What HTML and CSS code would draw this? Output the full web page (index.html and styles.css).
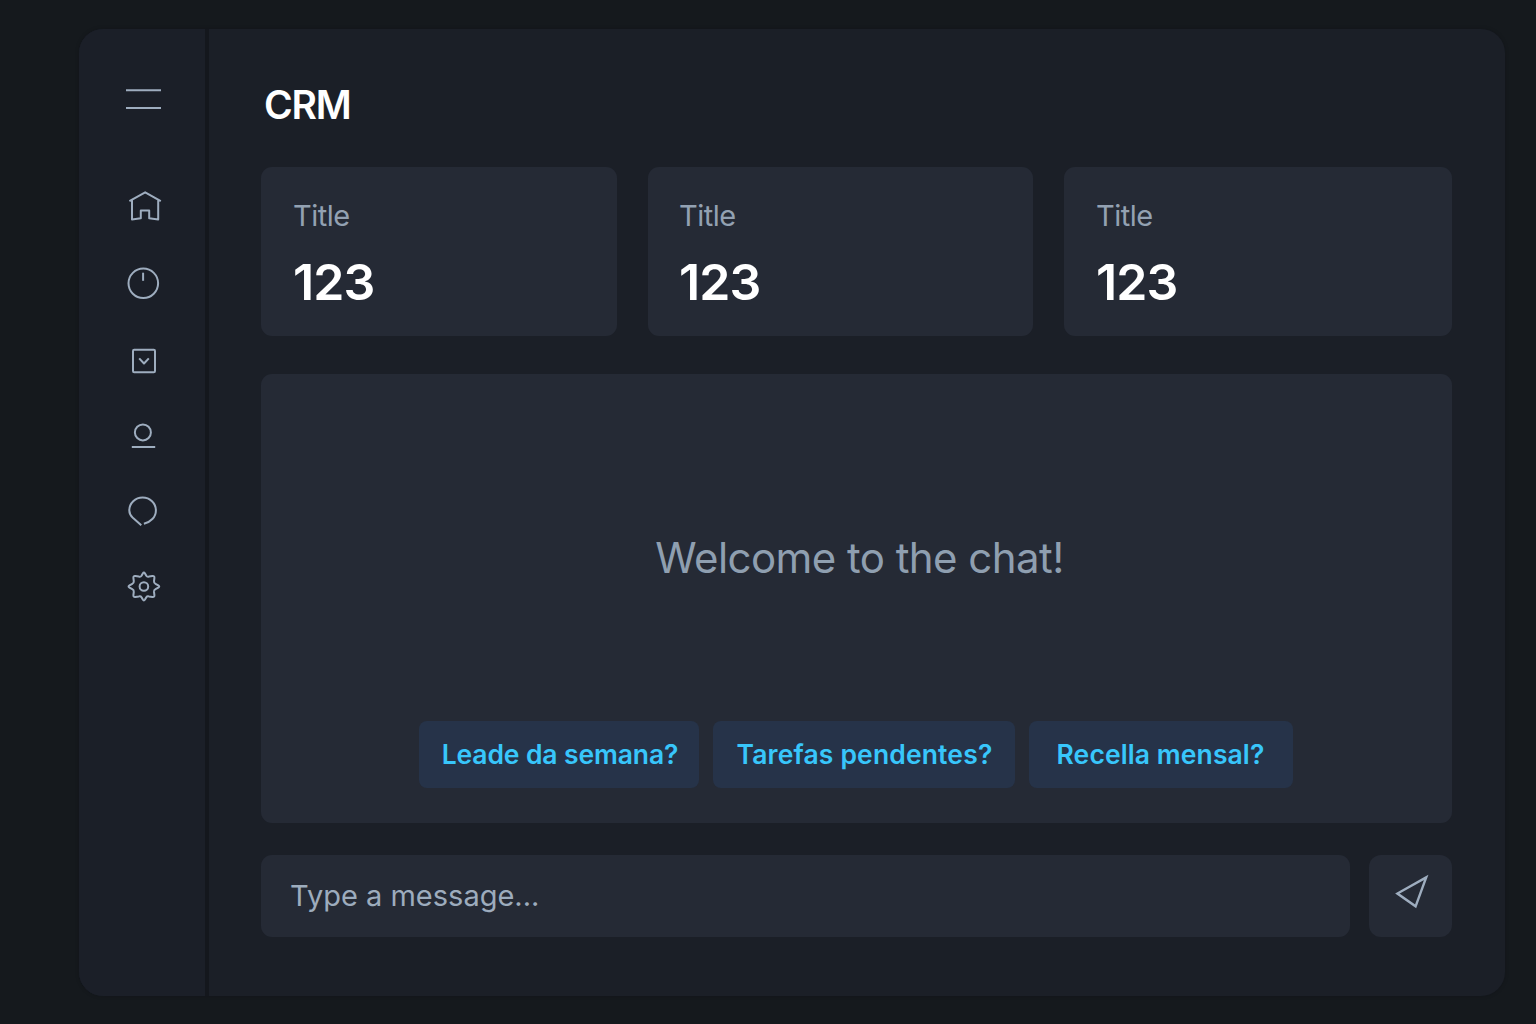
FILE: index.html
```html
<!DOCTYPE html>
<html lang="en">
<head>
<meta charset="utf-8">
<title>CRM</title>
<link rel="stylesheet" href="styles.css">
</head>
<body>
<div class="window">
  <aside class="sidebar">
    <button class="icon-button menu" aria-label="Menu">
      <svg width="40" height="26" viewBox="0 0 40 26"><path d="M3 4.2H38M3 22H38"/></svg>
    </button>
    <nav class="nav">
      <a class="icon-button" aria-label="Home">
        <svg width="40" height="40" viewBox="0 0 40 40"><path d="M5.4 16.2 21.2 7.3 36.8 16.2M8 15V34.4L16.8 33.2V25.5H25.2V33.2L34.2 34.4V15"/></svg>
      </a>
      <a class="icon-button" aria-label="Activity">
        <svg width="40" height="40" viewBox="0 0 40 40"><circle cx="19.3" cy="20.3" r="14.8"/><path d="M19.1 9.7V17.8"/></svg>
      </a>
      <a class="icon-button" aria-label="Inbox">
        <svg width="40" height="40" viewBox="0 0 40 40"><rect x="9" y="9.8" width="22" height="22.4" rx="1.2"/><path d="M15.2 18.4 20 23.5 24.8 18.4"/></svg>
      </a>
      <a class="icon-button" aria-label="Contacts">
        <svg width="40" height="40" viewBox="0 0 40 40"><circle cx="18.9" cy="16.4" r="8"/><path d="M7.8 31H31.2"/></svg>
      </a>
      <a class="icon-button" aria-label="Chat">
        <svg width="40" height="40" viewBox="0 0 40 40"><path d="M17.3 34.3 9.1 27.1C6.8 24.9 5.3 22.3 5.3 19.4A13.3 12.9 0 0 1 31.9 19.4C31.9 26.2 26.5 31.1 19.9 32.8"/></svg>
      </a>
      <a class="icon-button" aria-label="Settings">
        <svg width="40" height="40" viewBox="0 0 40 40"><path d="M18.8 6.4Q19.9 4.6 21 6.4L22.3 8.8Q23.2 10.2 25 9.6L28.4 9Q30.7 8.7 30.4 11L30 14.1Q29.8 16 31.5 16.8L34.3 18.4Q36.2 19.5 34.3 20.6L31.5 22.2Q29.8 23 30 24.9L30.4 28Q30.7 30.3 28.4 30L25 29.4Q23.2 28.8 22.3 30.2L21 32.6Q19.9 34.4 18.8 32.6L17.5 30.2Q16.6 28.8 14.8 29.4L11.4 30Q9.1 30.3 9.4 28L9.8 24.9Q10 23 8.3 22.2L5.5 20.6Q3.6 19.5 5.5 18.4L8.3 16.8Q10 16 9.8 14.1L9.4 11Q9.1 8.7 11.4 9L14.8 9.6Q16.6 10.2 17.5 8.8Z"/><circle cx="19.9" cy="19.5" r="4.3"/></svg>
      </a>
    </nav>
  </aside>
  <main class="content">
    <h1 class="page-title">CRM</h1>
    <section class="stats">
      <article class="card"><p class="card-title">Title</p><p class="card-value">123</p></article>
      <article class="card card-second"><p class="card-title">Title</p><p class="card-value">123</p></article>
      <article class="card card-third"><p class="card-title">Title</p><p class="card-value">123</p></article>
    </section>
    <section class="chat">
      <p class="welcome">Welcome to the chat!</p>
      <div class="suggestions">
        <button class="chip chip-leads"><span>Leade da semana?</span></button>
        <button class="chip chip-tasks"><span>Tarefas pendentes?</span></button>
        <button class="chip chip-revenue"><span>Recella mensal?</span></button>
      </div>
    </section>
    <form class="composer">
      <div class="message"><span>Type a message...</span></div>
      <button class="send" type="button" aria-label="Send">
        <svg width="44" height="44" viewBox="0 0 44 44"><path d="M37.2 7.4 8.4 23.5 26.6 36.3Z"/></svg>
      </button>
    </form>
  </main>
</div>
</body>
</html>
```
FILE: styles.css
```css
* { box-sizing: border-box; }

body {
  margin: 0;
  width: 1536px;
  height: 1024px;
  padding: 29px 31px 28px 79px;
  overflow: hidden;
  background: #15191d;
  font-family: Inter, "Liberation Sans", sans-serif;
}

h1, p { margin: 0; font-weight: 400; }
button { border: 0; padding: 0; font: inherit; }
span, p, h1 { white-space: nowrap; }

svg {
  display: block;
  fill: none;
  stroke: #9eadbf;
  stroke-width: 2;
  stroke-linejoin: round;
}

.window {
  display: flex;
  height: 967px;
  border-radius: 24px;
  overflow: hidden;
  background: #1b1f27;
  box-shadow: 0 0 4px rgba(10, 12, 15, 0.2);
}

.sidebar {
  flex: none;
  width: 130px;
  padding: 57px 0 0 44px;
  border-right: 4px solid #14171d;
  background: #1b1f28;
}

.icon-button { display: block; background: none; }
.menu { height: 26px; }

.nav {
  display: flex;
  flex-direction: column;
  gap: 35.6px;
  padding: 73.4px 0 0 0.5px;
}

.nav .icon-button:first-child { margin-bottom: 2.4px; }
.nav .icon-button:nth-child(2) { margin-bottom: 1px; }

.content {
  flex: 1;
  padding: 52px 53px 0 52px;
}

.page-title {
  height: 48px;
  margin-left: 3px;
  font-size: 39px;
  line-height: 48px;
  font-weight: 600;
  letter-spacing: -1.2px;
  color: #fff;
}

.stats {
  display: grid;
  grid-template-columns: 356px 385px 388px;
  justify-content: space-between;
  margin-top: 38px;
}

.card {
  height: 169px;
  padding: 31px 32px;
  border-radius: 11px;
  background: #252a35;
}

.card-second { padding-left: 31px; }

.card-title {
  font-size: 29px;
  line-height: 36px;
  letter-spacing: -0.5px;
  color: #93a1b2;
}

.card-value {
  margin-top: 18px;
  font-size: 50px;
  line-height: 60px;
  font-weight: 600;
  letter-spacing: -0.9px;
  color: #fff;
}

.chat {
  display: flex;
  flex-direction: column;
  align-items: center;
  justify-content: space-between;
  height: 449px;
  margin-top: 38px;
  padding: 158px 0 35px;
  border-radius: 11px;
  background: #252a35;
}

.welcome {
  padding-left: 6px;
  font-size: 42px;
  line-height: 52px;
  letter-spacing: -0.56px;
  color: #8f9fb0;
}

.suggestions {
  display: flex;
  gap: 14px;
  padding-right: 2px;
}

.chip {
  display: flex;
  align-items: center;
  justify-content: center;
  height: 67px;
  padding-bottom: 2px;
  border-radius: 8px;
  background: #263349;
  font-size: 26.5px;
  font-weight: 600;
  color: #38c6fb;
}

.chip-leads { width: 280px; padding-left: 3px; letter-spacing: -0.12px; }
.chip-tasks { width: 302px; padding-left: 2px; letter-spacing: 0.15px; }
.chip-revenue { width: 264px; letter-spacing: 0.1px; }

.composer {
  display: flex;
  gap: 19px;
  height: 82px;
  margin-top: 32px;
}

.message {
  display: flex;
  align-items: center;
  flex: 1;
  padding: 0 0 2px 29px;
  border-radius: 11px;
  background: #252a35;
  font-size: 29px;
  color: #9dacbd;
}

.send {
  display: flex;
  align-items: flex-start;
  width: 83px;
  padding: 15px 0 0 20px;
  border-radius: 12px;
  background: #252a35;
}

.send svg {
  stroke-width: 2.4;
  stroke-linejoin: miter;
}
```
